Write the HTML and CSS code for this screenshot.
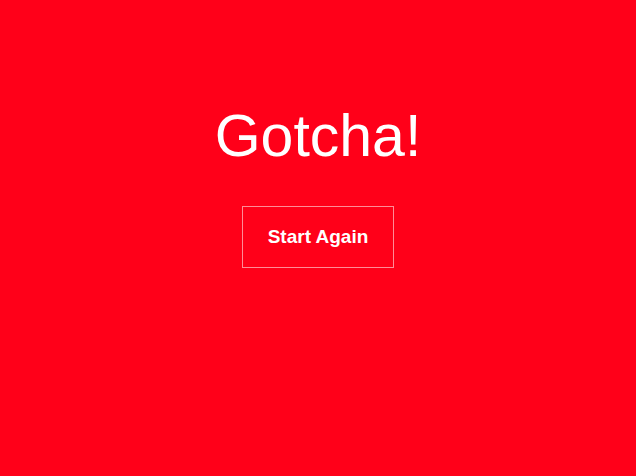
FILE: index.html
```html
<!DOCTYPE html>
<html>
<head>
<meta charset="utf-8">
<link rel="stylesheet" href="styles.css">
</head>
<body>
<main class="screen">
  <h1 class="title">Gotcha!</h1>
  <button class="again">Start Again</button>
</main>
</body>
</html>
```
FILE: styles.css
```css
html, body {
  margin: 0;
  padding: 0;
  height: 100%;
  background: #ff0019;
}
.screen {
  display: flex;
  flex-direction: column;
  align-items: center;
  padding-top: 101px;
  font-family: "Liberation Sans", Arial, sans-serif;
  color: #fff;
}
.title {
  margin: 0;
  font-size: 59px;
  font-weight: normal;
  line-height: 70px;
}
.again {
  margin-top: 35px;
  width: 152px;
  height: 62px;
  background: transparent;
  border: 1px solid rgba(255, 255, 255, 0.55);
  color: #fff;
  font-family: "Liberation Sans", Arial, sans-serif;
  font-size: 19px;
  font-weight: bold;
  padding: 0;
}
```
